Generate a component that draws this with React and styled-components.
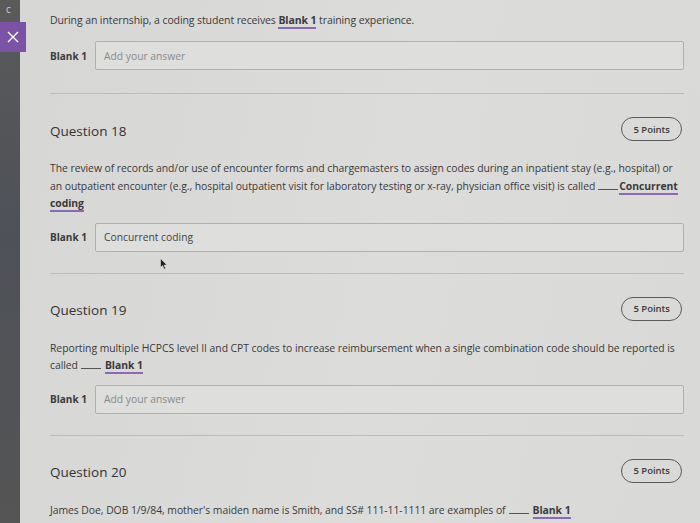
import React from 'react';
import styled, { createGlobalStyle } from 'styled-components';

const Global = createGlobalStyle`
  html, body {
    margin: 0;
    padding: 0;
    background: #d8d8d6;
  }
  body {
    font-family: "Open Sans", "Noto Sans", sans-serif;
    color: #3a3a3a;
  }
`;

const Page = styled.div`
  position: relative;
  display: flex;
  width: 700px;
  height: 523px;
  overflow: hidden;
  background: linear-gradient(100deg, #d6d6d4 0%, #dcdcda 55%, #d9d9d7 100%);
`;

const Rail = styled.div`
  width: 20px;
  flex-shrink: 0;
  background: linear-gradient(180deg, #5a5a5a 0%, #4e5158 45%, #555 100%);
  color: #cfcfcf;
  font-size: 10px;
  padding: 2px 0 0 6px;
  box-sizing: border-box;
`;

const CloseButton = styled.div`
  position: absolute;
  left: 0;
  top: 22px;
  width: 26px;
  height: 30px;
  background: #7b52a6;
  display: flex;
  align-items: center;
  justify-content: center;
`;

const Main = styled.div`
  flex: 1;
  min-width: 0;
  padding: 12px 16px 0 30px;
  position: relative;
`;

const Prompt = styled.div`
  font-size: 10.5px;
  line-height: 16px;
  letter-spacing: -0.1px;
`;

const Para = styled.div`
  font-size: 10.4px;
  line-height: 17.5px;
  margin-top: 19px;
  letter-spacing: -0.05px;
  white-space: nowrap;
`;

const Answer = styled.span`
  font-weight: 700;
  border-bottom: 2px solid #8b6ab3;
  margin-left: ${(p) => p.$left ?? 4}px;
`;

const Gap = styled.span`
  display: inline-block;
  width: 20px;
  border-bottom: 1px solid #555;
  margin-left: 3px;
`;

const AnswerRow = styled.div`
  display: flex;
  align-items: center;
  margin-top: ${(p) => p.$top}px;
`;

const BlankLabel = styled.div`
  width: 45px;
  flex-shrink: 0;
  font-size: 10px;
  font-weight: 700;
`;

const Field = styled.div`
  flex: 1;
  height: 29px;
  border: 1px solid #b0b0ae;
  border-radius: 2px;
  background: #dededc;
  box-sizing: border-box;
  display: flex;
  align-items: center;
  padding-left: 8px;
  font-size: 10.3px;
  color: ${(p) => (p.$filled ? '#444' : '#8a8a8a')};
`;

const Divider = styled.div`
  height: 1px;
  background: #bcbcba;
  margin-top: ${(p) => p.$top ?? 21}px;
`;

const Header = styled.div`
  display: flex;
  align-items: center;
  justify-content: space-between;
  height: 24px;
  margin-top: 23px;
`;

const Title = styled.div`
  font-size: 13.5px;
  font-weight: 500;
  color: #333;
  padding-top: 3px;
`;

const Points = styled.div`
  height: 22px;
  padding: 0 11px;
  border: 1.5px solid #5a5a5a;
  border-radius: 12px;
  display: flex;
  align-items: center;
  font-size: 9.5px;
  font-weight: 600;
  margin-right: 2px;
`;

const Cursor = styled.svg`
  position: absolute;
  left: 140px;
  top: 258px;
`;

const Question = ({ n, children, answer, filled, last }) => (
  <>
    <Header>
      <Title>Question {n}</Title>
      <Points>5 Points</Points>
    </Header>
    <Para>{children}</Para>
    {!last && (
      <>
        <AnswerRow $top={10}>
          <BlankLabel>Blank 1</BlankLabel>
          <Field $filled={filled}>{answer}</Field>
        </AnswerRow>
        <Divider />
      </>
    )}
  </>
);

export default function App() {
  return (
    <>
      <Global />
      <Page>
        <Rail>c</Rail>
        <CloseButton>
          <svg width="12" height="12" viewBox="0 0 12 12">
            <path d="M1 1 L11 11 M11 1 L1 11" stroke="#fff" strokeWidth="1.4" />
          </svg>
        </CloseButton>
        <Main>
          <Prompt>
            During an internship, a coding student receives <Answer $left={0}>Blank 1</Answer> training experience.
          </Prompt>
          <AnswerRow $top={13}>
            <BlankLabel>Blank 1</BlankLabel>
            <Field>Add your answer</Field>
          </AnswerRow>
          <Divider $top={23} />

          <Question n={18} answer="Concurrent coding" filled>
            The review of records and/or use of encounter forms and chargemasters to assign codes during an inpatient stay (e.g., hospital) or
            <br />
            an outpatient encounter (e.g., hospital outpatient visit for laboratory testing or x-ray, physician office visit) is called
            <Gap />
            <Answer $left={1}>Concurrent</Answer>
            <br />
            <Answer $left={0}>coding</Answer>
          </Question>

          <Question n={19} answer="Add your answer">
            Reporting multiple HCPCS level II and CPT codes to increase reimbursement when a single combination code should be reported is
            <br />
            called<Gap />
            <Answer>Blank 1</Answer>
          </Question>

          <Question n={20} last>
            James Doe, DOB 1/9/84, mother's maiden name is Smith, and SS# 111-11-1111 are examples of<Gap />
            <Answer>Blank 1</Answer>
          </Question>

          <Cursor width="8" height="12" viewBox="0 0 8 12">
            <path d="M0.5 0.5 L0.5 9.5 L2.6 7.6 L4.2 11.2 L5.6 10.6 L4.1 7.1 L7 7 Z" fill="#222" stroke="#ddd" strokeWidth="0.6" />
          </Cursor>
        </Main>
      </Page>
    </>
  );
}
